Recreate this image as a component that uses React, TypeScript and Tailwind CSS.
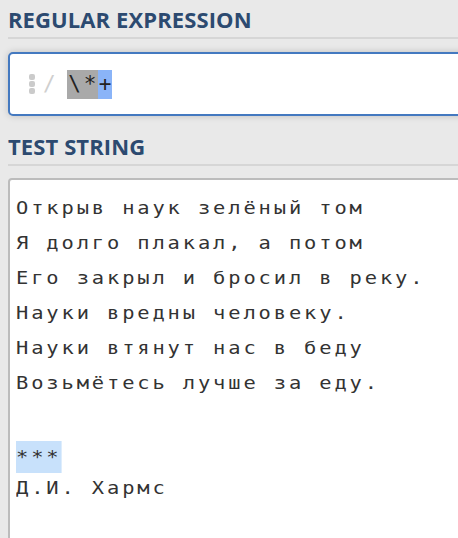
import React from 'react'

const lines = [
    'Открыв наук зелёный том',
    'Я долго плакал, а потом',
    'Его закрыл и бросил в реку.',
    'Науки вредны человеку.',
    'Науки втянут нас в беду',
    'Возьмётесь лучше за еду.',
    '',
]

const SectionTitle = ({ title }: { title: string }) => {
    return (
        <div className="w-full pt-[4px] pb-[3px] border-b-2 border-[#d6d6d6]">
            <p className="text-[22px] leading-[30px] font-bold text-[#2c4a70] tracking-[0.1px] font-['Open_Sans',sans-serif]">{title}</p>
        </div>
    )
}

const App = () => {
    return (
        <div className="w-[458px] h-[538px] bg-[#e9e9e9] overflow-hidden pl-2 flex flex-col">
            <SectionTitle title="REGULAR EXPRESSION" />
            <div className="mt-[13px] w-[470px] h-[64px] shrink-0 bg-white border-2 border-[#4479c0] rounded-[5px] shadow-[0_0_7px_rgba(0,0,0,0.18)] flex flex-row items-center pl-[19px]">
                <div className="flex flex-col gap-[1px]">
                    <span className="w-[6px] h-[6px] rounded-[2px] bg-[#cbcbcb]"></span>
                    <span className="w-[6px] h-[6px] rounded-[2px] bg-[#cbcbcb]"></span>
                    <span className="w-[6px] h-[6px] rounded-[2px] bg-[#cbcbcb]"></span>
                </div>
                <span className="ml-[8px] w-[12px] text-[21px] leading-[29px] text-[#cfcfcf] font-['DejaVu_Sans_Mono',monospace]">/</span>
                <div className="ml-[12px] flex flex-row items-center font-['DejaVu_Sans_Mono',monospace] text-[21px] text-[#222]">
                    <span className="w-[31px] h-[29px] leading-[29px] bg-[#a9a9a9] flex flex-row">
                        <span className="w-[15px] text-center">\</span>
                        <span className="w-[16px] text-center">*</span>
                    </span>
                    <span className="w-[14px] h-[29px] leading-[29px] bg-[#8ab4f8] text-center">+</span>
                </div>
            </div>
            <div className="mt-[11px]">
                <SectionTitle title="TEST STRING" />
            </div>
            <div className="mt-[12px] w-[470px] h-[400px] shrink-0 bg-white border-2 border-[#bcbcbc] rounded-[4px] pt-[11px] pl-[6px]">
                <div className="font-['DejaVu_Sans_Mono',monospace] text-[17px] leading-[35px] tracking-[2.4px] text-[#333] whitespace-pre">
                    {lines.map((line, ind) => {
                        return <div key={ind} className="h-[35px] scale-x-[1.2] origin-left">{line}</div>
                    })}
                    <div className="h-[35px] scale-x-[1.2] origin-left">
                        <span className="relative inline-block top-[4px]">
                            <span className="absolute left-0 top-[1px] w-full h-[32px] bg-[#c8e1fb]"></span>
                            <span className="relative">***</span>
                        </span>
                    </div>
                    <div className="h-[35px] scale-x-[1.2] origin-left">Д.И. Хармс</div>
                </div>
            </div>
        </div>
    )
}

export default App
